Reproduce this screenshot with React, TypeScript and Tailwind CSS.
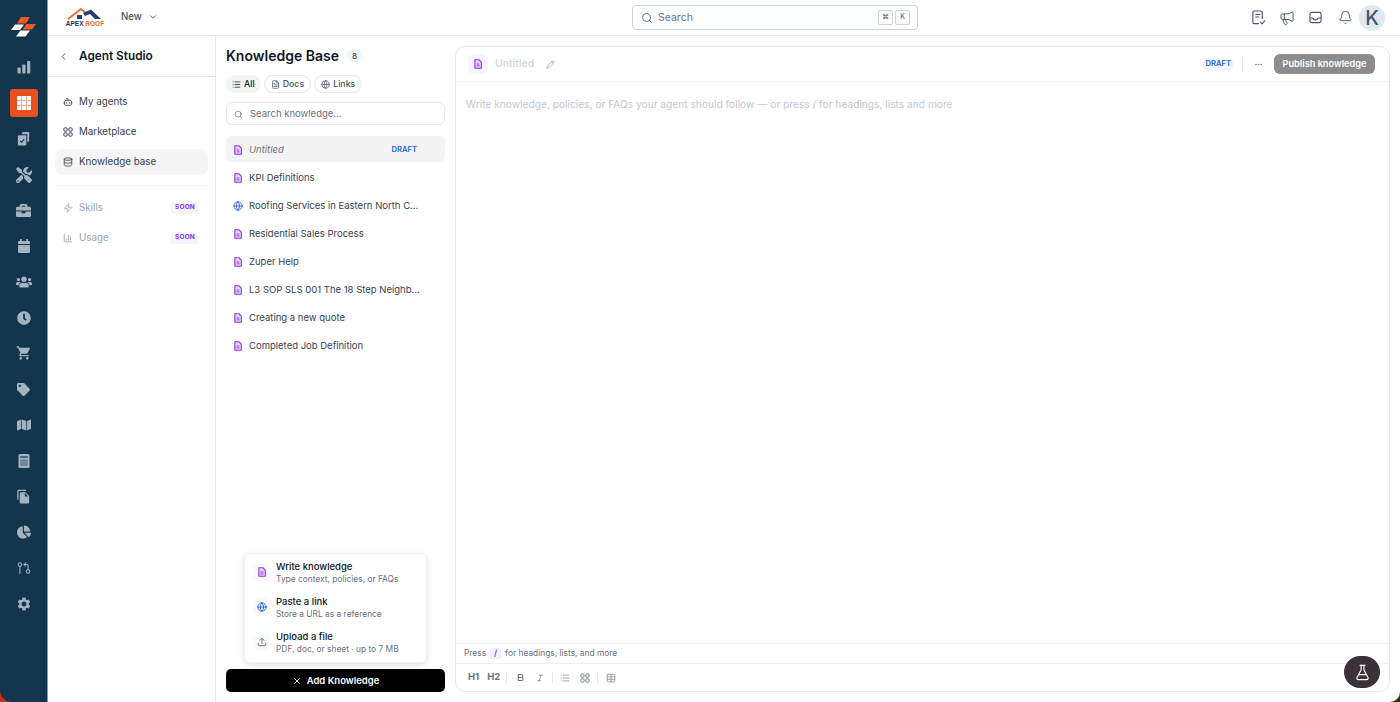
import React from "react";
import {
  ChevronDown, ChevronLeft, Search, Megaphone, Bell, Bot, Database, Zap, BarChart3,
  List, FileText, Globe, Pencil, Ellipsis, X, Upload, Bold, Italic, Table, FlaskConical, GitPullRequestArrow,
} from "lucide-react";
import { FaTools, FaBriefcase, FaUsers, FaClock, FaTag, FaMap, FaChartPie } from "react-icons/fa";
import { MdShoppingCart, MdSettings, MdFileCopy } from "react-icons/md";

const C = "text-[#a3b3c0]";

function DocIcon({ className = "" }: { className?: string }) {
  return (
    <svg viewBox="0 0 16 16" className={className}>
      <path d="M3 1.200h6.500l3.800 3.800v9.800H3z" fill="#e9d5ff" stroke="#9333ea" strokeWidth="1.800" strokeLinejoin="round" />
      <path d="M5.600 8h4.800M5.600 11h4.800" stroke="#9333ea" strokeWidth="1.500" />
    </svg>
  );
}

function GlobeIcon({ className = "" }: { className?: string }) {
  return <Globe className={`text-[#2563eb] ${className}`} strokeWidth={2.200} />;
}

function Logo() {
  return (
    <svg viewBox="0 0 26 26" className="w-[26px] h-[26px]">
      <path d="M10 0h9l-4 6.500h-9z" fill="#f15a24" />
      <path d="M15.500 7h9.500l-4 5.500h-9.500z" fill="#f15a24" />
      <path d="M4 7.500h9l-4 5.500H0z" fill="#fff" />
      <path d="M9.500 13.500H19l-4.500 6H5z" fill="#fff" />
    </svg>
  );
}

function BrandLogo() {
  return (
    <div className="w-[42px] h-[20px] flex flex-col items-center">
      <svg viewBox="0 0 42 12" className="w-[42px] h-[12px] shrink-0">
        <path d="M4 11 L17 1 L22 5" fill="none" stroke="#ee6c2b" strokeWidth="1.800" />
        <path d="M19 5 L27 1.500 L37 11 L31 11 L26 6 L21 8z" fill="#24406b" />
        <rect x="13" y="7" width="5" height="4" fill="#24406b" />
      </svg>
      <div className="flex text-[6.500px] leading-[7px] font-extrabold font-['Liberation_Sans',sans-serif] whitespace-nowrap">
        <span className="text-[#1f2f57]">APEX&nbsp;</span><span className="text-[#ee6c2b]">ROOF</span>
      </div>
    </div>
  );
}

function GridIcon() {
  return (
    <svg viewBox="0 0 14 14" className="w-[14px] h-[14px]">
      <rect width="14" height="14" fill="#f4a488" rx="1" />
      {[0, 5, 10].flatMap((x) => [0, 5, 10].map((y) => <rect key={`${x}-${y}`} x={x} y={y} width="4" height="4" fill="#fff" />))}
    </svg>
  );
}

function BarsFilled() {
  return (
    <svg viewBox="0 0 14 14" className="w-[14px] h-[14px]" fill="#a3b3c0">
      <rect x="0.500" y="7.500" width="3.200" height="6" rx="0.800" />
      <rect x="5.300" y="4.500" width="3.200" height="9" rx="0.800" />
      <rect x="10.100" y="1" width="3.200" height="12.500" rx="0.800" />
    </svg>
  );
}

function TasksIcon() {
  return (
    <svg viewBox="0 0 16 16" className="w-[15px] h-[15px]">
      <path d="M6 3.500 L7 1h7v10l-2 .8V3.500z" fill="#a3b3c0" />
      <rect x="2" y="4.500" width="9" height="11" rx="1.200" fill="#a3b3c0" />
      <path d="M4.500 10.500l1.500 1.500 2.700-3" fill="none" stroke="#12344d" strokeWidth="1.200" />
    </svg>
  );
}

function CalendarIcon() {
  return (
    <svg viewBox="0 0 14 14" className="w-[14px] h-[14px]">
      <rect x="3" y="0" width="1.800" height="3" fill="#a3b3c0" />
      <rect x="9.200" y="0" width="1.800" height="3" fill="#a3b3c0" />
      <path d="M1 3.200a1.200 1.200 0 011.200-1.200h9.600A1.200 1.200 0 0113 3.200V5H1z" fill="#a3b3c0" />
      <path d="M1 6h12v6.800a1.200 1.200 0 01-1.200 1.200H2.200A1.200 1.200 0 011 12.800z" fill="#a3b3c0" />
    </svg>
  );
}

function CalcIcon() {
  return (
    <svg viewBox="0 0 12 14" className="w-[12px] h-[14px]">
      <rect x="0.500" width="11" height="14" rx="1.500" fill="#a3b3c0" />
      <rect x="2.200" y="2" width="7.600" height="2" fill="#12344d" opacity="0.600" />
      <rect x="2.200" y="5.500" width="7.600" height="6.500" fill="#12344d" opacity="0.350" />
    </svg>
  );
}

function CheckDocIcon() {
  return (
    <svg viewBox="0 0 16 16" className="w-[15px] h-[15px]" fill="none" stroke="#475569" strokeWidth="1.200" strokeLinecap="round" strokeLinejoin="round">
      <path d="M8 14.500H3.500a1.500 1.500 0 01-1.500-1.500V2.500A1.500 1.500 0 013.500 1h7A1.500 1.500 0 0112 2.500V9" />
      <path d="M5 4.800h4.500M5 7.500h3" />
      <path d="M10 13l1.700 1.700 3-3.200" />
    </svg>
  );
}

function TrayIcon() {
  return (
    <svg viewBox="0 0 14 14" className="w-[13px] h-[13px]" fill="none" stroke="#475569" strokeWidth="1.200" strokeLinejoin="round">
      <rect x="1" y="1.500" width="12" height="11" rx="2" />
      <path d="M1 7.500h3.200c.5 1.300 1.500 2 2.800 2s2.300-.7 2.800-2H13" />
    </svg>
  );
}

function GridSmall({ stroke = 1.2 }: { stroke?: number }) {
  return (
    <svg viewBox="0 0 12 12" className="w-[10px] h-[10px]" fill="none" stroke="currentColor" strokeWidth={stroke}>
      <rect x="1" y="1" width="4" height="4" rx="1.300" />
      <rect x="7" y="1" width="4" height="4" rx="1.300" />
      <rect x="1" y="7" width="4" height="4" rx="1.300" />
      <rect x="7" y="7" width="4" height="4" rx="1.300" />
    </svg>
  );
}

const railIcons = [
  <BarsFilled key="a" />,
  <div key="b" className="w-[28px] h-[28px] rounded-[3px] bg-[#e8501f] flex items-center justify-center"><GridIcon /></div>,
  <TasksIcon key="c" />,
  <FaTools key="d" className={`w-[16px] h-[16px] ${C}`} />,
  <FaBriefcase key="e" className={`w-[15px] h-[15px] ${C}`} />,
  <CalendarIcon key="f" />,
  <FaUsers key="g" className={`w-[16px] h-[16px] ${C}`} />,
  <FaClock key="h" className={`w-[14px] h-[14px] ${C}`} />,
  <MdShoppingCart key="i" className={`w-[16px] h-[16px] ${C}`} />,
  <FaTag key="j" className={`w-[13px] h-[13px] ${C}`} />,
  <FaMap key="k" className={`w-[14px] h-[14px] ${C}`} />,
  <CalcIcon key="l" />,
  <MdFileCopy key="m" className={`w-[15px] h-[15px] ${C}`} />,
  <FaChartPie key="n" className={`w-[14px] h-[14px] ${C}`} />,
  <GitPullRequestArrow key="o" className={`w-[14px] h-[14px] ${C}`} strokeWidth={1.800} />,
  <MdSettings key="p" className={`w-[16px] h-[16px] ${C}`} />,
];

const docs: { t: string; globe?: boolean }[] = [
  { t: "KPI Definitions" },
  { t: "Roofing Services in Eastern North C...", globe: true },
  { t: "Residential Sales Process" },
  { t: "Zuper Help" },
  { t: "L3 SOP SLS 001 The 18 Step Neighb..." },
  { t: "Creating a new quote" },
  { t: "Completed Job Definition" },
];

function Soon() {
  return (
    <span className="ml-auto mr-[9px] h-[12px] px-[4px] rounded-[3px] bg-[#f5f3ff] text-[#7c3aed] text-[6.500px] font-bold tracking-[0.200px] flex items-center">
      SOON
    </span>
  );
}

function NavItem({ icon, label, active }: { icon: React.ReactNode; label: string; active?: boolean }) {
  return (
    <div className={`h-[26px] mb-[4px] rounded-[8px] flex items-center pl-[8px] gap-[6px] text-[9.800px] text-[#374151] ${active ? "bg-[#f5f5f5]" : ""}`}>
      {icon}
      <span>{label}</span>
    </div>
  );
}

function Chip({ icon, label, active }: { icon: React.ReactNode; label: string; active?: boolean }) {
  return (
    <div className={`h-[18px] rounded-full px-[6px] flex items-center gap-[3px] text-[8.800px] font-medium ${active ? "bg-[#f3f4f6] text-[#111827]" : "border border-[#e5e7eb] text-[#4b5563]"}`}>
      {icon}
      <span>{label}</span>
    </div>
  );
}

function MenuItem({ icon, title, sub }: { icon: React.ReactNode; title: string; sub: string }) {
  return (
    <div className="h-[35px] flex items-center gap-[5px] pl-[8px]">
      <div className="w-[18px] h-[18px] rounded-[6px] bg-[#f9fafb] flex items-center justify-center shrink-0">{icon}</div>
      <div className="leading-none">
        <div className="text-[9.500px] font-medium text-[#111827] leading-[13px]">{title}</div>
        <div className="text-[8.400px] text-[#6b7280] leading-[12px]">{sub}</div>
      </div>
    </div>
  );
}

function Sep() {
  return <div className="w-px h-[11px] bg-[#e5e7eb]" />;
}

export default function App() {
  return (
    <div className="relative w-[1400px] h-[702px] overflow-hidden bg-white flex font-['Inter',sans-serif]">
      <aside className="w-[48px] shrink-0 h-full bg-[#12344d] border-r border-[#7f98ad] flex flex-col items-center">
        <div className="h-[40px] mt-[10px] flex items-center justify-center shrink-0"><Logo /></div>
        <div className="flex flex-col items-center mt-[-0.500px]">
          {railIcons.map((ic, i) => (
            <div key={i} className="h-[35.750px] w-full flex items-center justify-center">{ic}</div>
          ))}
        </div>
      </aside>

      <div className="flex-1 flex flex-col min-w-0">
        <header className="h-[36px] shrink-0 border-b border-[#e5e7eb] flex items-center relative">
          <div className="ml-[16px]"><BrandLogo /></div>
          <div className="ml-[15px] flex items-center gap-[6px] text-[9.700px] font-medium text-[#475569]">
            New <ChevronDown className="w-[10px] h-[10px]" />
          </div>
          <div className="absolute left-[584px] top-[5px] w-[286px] h-[25px] rounded-[4px] border border-[#cbd5e1] flex items-center pl-[8px] pr-[7px]">
            <Search className="w-[12px] h-[12px] text-[#64748b]" />
            <span className="ml-[5px] text-[10.500px] text-[#64748b]">Search</span>
            <div className="ml-auto flex gap-[2px]">
              <span className="w-[15px] h-[15px] border border-[#cbd5e1] rounded-[2px] text-[7px] text-[#475569] flex items-center justify-center">⌘</span>
              <span className="w-[15px] h-[15px] border border-[#cbd5e1] rounded-[2px] text-[7px] text-[#475569] flex items-center justify-center">K</span>
            </div>
          </div>
          <div className="ml-auto flex items-center text-[#475569]">
            <CheckDocIcon />
            <Megaphone className="ml-[13px] w-[16px] h-[16px]" strokeWidth={1.500} />
            <div className="ml-[14px]"><TrayIcon /></div>
            <Bell className="ml-[16px] w-[15px] h-[15px]" strokeWidth={1.500} />
            <div className="ml-[6px] w-[26px] h-[26px] mr-[15px] rounded-full bg-[#e2e8f0] text-[#475569] text-[20px] font-medium flex items-center justify-center">K</div>
          </div>
        </header>

        <div className="flex-1 flex min-h-0">
          <nav className="w-[168px] shrink-0 border-r border-[#e5e7eb]">
            <div className="h-[41px] pt-[1px] border-b border-[#e5e7eb] flex items-center pl-[10px] gap-[10px]">
              <ChevronLeft className="w-[11px] h-[11px] text-[#374151]" />
              <span className="text-[11.800px] font-semibold text-[#111827]">Agent Studio</span>
            </div>
            <div className="px-[7px] pt-[12px]">
              <NavItem icon={<Bot className="w-[10px] h-[10px]" />} label="My agents" />
              <NavItem icon={<GridSmall />} label="Marketplace" />
              <NavItem active icon={<Database className="w-[10px] h-[10px]" />} label="Knowledge base" />
              <div className="h-px bg-[#f3f4f6] mt-[10px] mb-[9px]" />
              <div className="h-[26px] mb-[4px] flex items-center pl-[8px] gap-[6px] text-[9.800px] text-[#9ca3af]">
                <Zap className="w-[10px] h-[10px]" /><span>Skills</span><Soon />
              </div>
              <div className="h-[26px] flex items-center pl-[8px] gap-[6px] text-[9.800px] text-[#9ca3af]">
                <BarChart3 className="w-[10px] h-[10px]" /><span>Usage</span><Soon />
              </div>
            </div>
          </nav>

          <section className="relative w-[239px] shrink-0 flex flex-col px-[10px]">
            <div className="h-[39px] flex items-center gap-[8px] shrink-0">
              <h1 className="text-[14px] font-semibold text-[#111827]">Knowledge Base</h1>
              <span className="w-[15px] h-[13px] rounded-full bg-[#f3f4f6] text-[8px] font-medium text-[#374151] flex items-center justify-center">8</span>
            </div>
            <div className="flex gap-[3px] shrink-0">
              <Chip active icon={<List className="w-[9px] h-[9px]" />} label="All" />
              <Chip icon={<FileText className="w-[9px] h-[9px]" />} label="Docs" />
              <Chip icon={<Globe className="w-[9px] h-[9px]" />} label="Links" />
            </div>
            <div className="mt-[9px] h-[23px] pt-[1px] rounded-[6px] border border-[#e5e7eb] flex items-center pl-[7px] gap-[7px] text-[9.500px] text-[#6b7280] shrink-0">
              <Search className="w-[9px] h-[9px] text-[#6b7280]" />
              <span>Search knowledge...</span>
            </div>
            <div className="mt-[11px] h-[26px] pt-[2px] rounded-[6px] bg-[#f4f4f5] flex items-center pl-[7px] gap-[6px] text-[9.500px] shrink-0">
              <DocIcon className="w-[10px] h-[10px]" />
              <span className="italic text-[#6b7280]">Untitled</span>
              <span className="ml-auto mr-[28px] text-[7.600px] font-semibold text-[#2563eb]">DRAFT</span>
            </div>
            <div className="mt-[2px]">
              {docs.map((d) => (
                <div key={d.t} className="h-[28px] flex items-center pl-[7px] gap-[6px] text-[9.500px] text-[#374151] whitespace-nowrap">
                  {d.globe ? <GlobeIcon className="w-[10px] h-[10px]" /> : <DocIcon className="w-[10px] h-[10px]" />}
                  <span>{d.t}</span>
                </div>
              ))}
            </div>
            <div className="absolute left-[28px] top-[517px] w-[183px] h-[110px] pb-[2px] rounded-[6px] bg-white border border-[#f1f1f3] shadow-[0_2px_6px_rgba(0,0,0,0.12)] flex flex-col justify-center">
              <MenuItem icon={<DocIcon className="w-[10px] h-[10px]" />} title="Write knowledge" sub="Type context, policies, or FAQs" />
              <MenuItem icon={<GlobeIcon className="w-[10px] h-[10px]" />} title="Paste a link" sub="Store a URL as a reference" />
              <MenuItem icon={<Upload className="w-[10px] h-[10px] text-[#4b5563]" />} title="Upload a file" sub="PDF, doc, or sheet · up to 7 MB" />
            </div>
            <button className="mt-auto mb-[10px] h-[23px] pt-[1px] rounded-[5px] bg-black text-white text-[9.500px] font-semibold flex items-center justify-center gap-[5px] shrink-0">
              <X className="w-[10px] h-[10px]" /> Add Knowledge
            </button>
          </section>

          <main className="flex-1 min-w-0 pr-[10px] pt-[10px] pb-[10px]">
            <div className="h-full rounded-[10px] border border-[#e5e7eb] flex flex-col">
              <div className="h-[35px] shrink-0 border-b border-[#f3f4f6] flex items-center pl-[12px] pr-[14px]">
                <div className="w-[20px] h-[20px] rounded-[6px] bg-[#f5f3ff] flex items-center justify-center"><DocIcon className="w-[10px] h-[10px]" /></div>
                <span className="ml-[7px] text-[10.500px] font-medium text-[#d1d5db]">Untitled</span>
                <Pencil className="ml-[12px] w-[9px] h-[9px] text-[#9ca3af]" />
                <span className="ml-auto h-[11px] px-[3px] rounded-full bg-[#eff6ff] text-[7.600px] font-semibold text-[#2563eb] flex items-center">DRAFT</span>
                <div className="w-px h-[13px] bg-[#e5e7eb] ml-[8px]" />
                <Ellipsis className="ml-[11px] w-[9px] h-[9px] text-[#6b7280]" />
                <button className="ml-[11px] w-[101px] h-[20px] rounded-[6px] bg-[#8c8c8c] text-white text-[9.200px] font-semibold flex items-center justify-center">Publish knowledge</button>
              </div>
              <div className="flex-1 px-[10px] pt-[15px] text-[10.200px] text-[#c4c7ce]">
                Write knowledge, policies, or FAQs your agent should follow — or press / for headings, lists and more
              </div>
              <div className="h-[21px] shrink-0 border-t border-b border-[#f0f0f2] flex items-center pl-[8px] text-[8.400px] text-[#6b7280]">
                Press
                <span className="mx-[4px] w-[11px] h-[11px] rounded-[3px] bg-[#f5f3ff] border border-[#ede9fe] text-[#7c3aed] font-semibold flex items-center justify-center">/</span>
                for headings, lists, and more
              </div>
              <div className="h-[27px] shrink-0 flex items-center pl-[12px] text-[#6b7280]">
                <span className="text-[9.500px] font-bold">H1</span>
                <span className="ml-[8px] text-[9.500px] font-bold">H2</span>
                <div className="ml-[6px]"><Sep /></div>
                <Bold className="ml-[9px] w-[9px] h-[9px]" strokeWidth={3} />
                <Italic className="ml-[11px] w-[8px] h-[8px]" />
                <div className="ml-[8px]"><Sep /></div>
                <List className="ml-[7px] w-[10px] h-[10px]" strokeWidth={1.500} />
                <div className="ml-[10px]"><GridSmall stroke={1} /></div>
                <div className="ml-[7px]"><Sep /></div>
                <Table className="ml-[8px] w-[10px] h-[10px]" strokeWidth={1.500} />
              </div>
            </div>
          </main>
        </div>
      </div>

      <div className="absolute left-[1344px] top-[656px] w-[36px] h-[32px] rounded-full bg-[#3a3236] flex items-center justify-center">
        <FlaskConical className="w-[17px] h-[17px] text-white" strokeWidth={1.600} />
      </div>
      <div className="absolute left-0 bottom-0 w-[12px] h-[12px] bg-[#c8300f]">
        <div className="w-full h-full bg-[#12344d] rounded-bl-[12px]" />
      </div>
      <div className="absolute right-0 bottom-0 w-[10px] h-[10px] bg-[#2f3314]">
        <div className="w-full h-full bg-white rounded-br-[10px]" />
      </div>
    </div>
  );
}
